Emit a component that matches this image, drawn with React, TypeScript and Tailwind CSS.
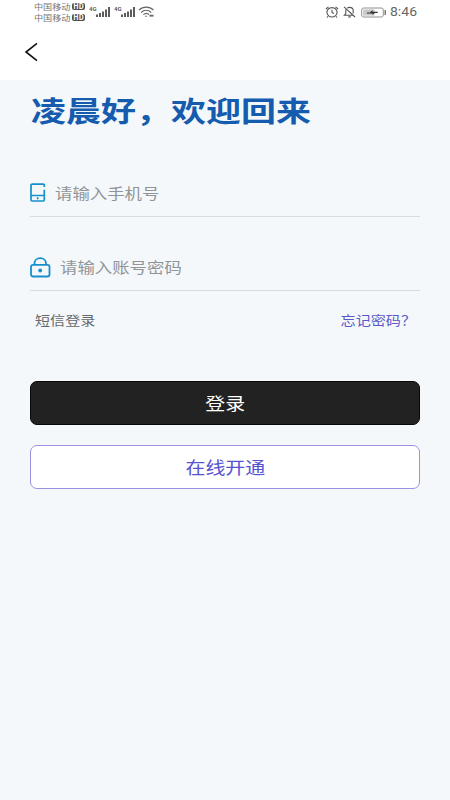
const Carrier = () => (
  <div className="flex h-[11px] items-center">
    <span className="w-[37px] origin-left scale-x-[1.14] whitespace-nowrap text-[8px] leading-[11px] text-[#777]">
      中国移动
    </span>
    <span className="ml-[1px] flex h-[7px] w-[13px] items-center justify-center rounded-[2px] bg-[#505050] text-[7px] font-bold leading-none text-white">
      HD
    </span>
  </div>
);

const Signal = () => (
  <svg width="23" height="13" viewBox="0 0 23 13" fill="#5c5c5c">
    <text x="0" y="6" fontSize="6" fontWeight="bold" fontFamily="Roboto, sans-serif">
      4G
    </text>
    <rect x="7" y="9.5" width="2" height="2.5" />
    <rect x="10" y="8" width="2" height="4" />
    <rect x="13" y="6.5" width="2" height="5.5" />
    <rect x="16" y="4.5" width="2" height="7.5" />
    <rect x="19" y="2" width="2" height="10" />
  </svg>
);

const Wifi = () => (
  <svg width="17" height="12" viewBox="0 0 17 12" fill="none" stroke="#666" strokeWidth="1.2">
    <path d="M1 4.2C5 .1 11.500 .1 15.500 4.200M3.200 6.500c3-3 7-3 10 0M5.400 8.700c1.700-1.700 4-1.700 5.700 0" />
    <circle cx="8" cy="10.300" r=".8" fill="#666" stroke="none" />
    <path d="M11.500 9.700h4" strokeWidth="1.800" />
  </svg>
);

const Alarm = () => (
  <svg width="14" height="12" viewBox="0 0 14 12" fill="none" stroke="#555" strokeWidth="1.1">
    <ellipse cx="7" cy="6.300" rx="5.100" ry="4.700" />
    <path d="M.9 3 3.500 .9M13.100 3 10.500 .9M7 3.800v2.700l2 1M3 10.300l-1 1.200M11 10.300l1 1.200" />
  </svg>
);

const BellOff = () => (
  <svg width="13" height="12" viewBox="0 0 13 12" fill="none" stroke="#555" strokeWidth="1.1">
    <path d="M1 .8 12 11M2.800 3.500v4L1.300 9.300h8.400M4.300 2C5 1.600 5.600 1.400 6.500 1.400c2.200 0 3.700 1.300 3.700 3.400V7.500M5.300 10.900h2.500" />
  </svg>
);

const Battery = () => (
  <svg width="26" height="11" viewBox="0 0 26 11" fill="none">
    <rect x=".7" y="1" width="21.600" height="9" rx="2" stroke="#909090" fill="#fff" />
    <rect x="2.200" y="2.400" width="11.300" height="6.200" fill="#c8c8c8" />
    <path d="M6 5.400h3L11.500 3v1.700h5.200v1.400h-3L11.500 8V6.500H6z" fill="#333" />
    <rect x="23.500" y="3" width="1.500" height="5" rx=".5" fill="#777" />
  </svg>
);

const PhoneIcon = () => (
  <svg width="16" height="20" viewBox="0 0 16 20" fill="none" stroke="#168fcc" strokeWidth="1.700">
    <path d="M14.300 4V2.200Q14.300 1.200 13.200 1.200H2.200Q1 1.200 1 2.200V16.800Q1 18 2.200 18H13.200Q14.300 18 14.300 16.800V6.800M1 12.500H14.300" />
    <circle cx="7.700" cy="15.300" r="1.100" fill="#168fcc" stroke="none" />
  </svg>
);

const LockIcon = () => (
  <svg width="22" height="21" viewBox="0 0 22 21" fill="none" stroke="#168fcc" strokeWidth="1.800">
    <rect x="1" y="7.800" width="18.500" height="11.700" rx="2" />
    <path d="M4.500 7.800V6.300C4.500 3.300 7 1.100 10.200 1.100s5.800 2.200 5.800 5.200v1.500" />
    <circle cx="10.200" cy="13.500" r="1.900" fill="#168fcc" stroke="none" />
  </svg>
);

export default function App() {
  return (
    <div className="h-[800px] w-[450px] overflow-hidden bg-[#f4f8fb] font-['Noto_Sans_CJK_SC',sans-serif]">
      <header className="h-20 bg-white">
        <div className="flex h-6 items-start justify-between pl-[34px] pr-[33px]">
          <div className="flex">
            <div className="pt-[1px]">
              <Carrier />
              <Carrier />
            </div>
            <div className="ml-[4px] flex gap-[2px] pt-[5px]">
              <Signal />
              <Signal />
              <span className="-ml-[1px] pt-[1px]">
                <Wifi />
              </span>
            </div>
          </div>
          <div className="flex h-6 items-center">
            <Alarm />
            <span className="ml-[4px]">
              <BellOff />
            </span>
            <span className="ml-[5px]">
              <Battery />
            </span>
            <span className="ml-[3px] w-[27px] origin-left scale-x-[1.12] pt-[1px] font-[Roboto] text-[12.500px] leading-none text-[#666]">
              8:46
            </span>
          </div>
        </div>
        <button type="button" aria-label="返回" className="ml-6 mt-[18px] block">
          <svg width="15" height="20" viewBox="0 0 15 20" fill="none" stroke="#111" strokeWidth="1.600">
            <path d="M13 1.300 2 10l11 8.700" />
          </svg>
        </button>
      </header>

      <main className="px-[30px]">
        <h1 className="ml-[1px] flex h-[60px] origin-left scale-x-[1.215] items-center whitespace-nowrap text-[28.800px] font-bold leading-none text-[#155bae]">
          凌晨好，欢迎回来
        </h1>
        <div className="mt-[30px] flex h-[47px] items-center border-b border-[#d9dcdf]">
          <PhoneIcon />
          <span className="ml-[9px] origin-left scale-x-[1.2] text-[14.500px] text-[#919497]">请输入手机号</span>
        </div>
        <div className="mt-[27px] flex h-[47px] items-center border-b border-[#d9dcdf]">
          <LockIcon />
          <span className="ml-[8px] origin-left scale-x-[1.2] text-[14.500px] text-[#919497]">请输入账号密码</span>
        </div>
        <div className="flex h-[58px] items-center justify-between pl-[5px] pr-[4px] text-[13px]">
          <span className="origin-left scale-x-[1.16] text-[#66696b]">短信登录</span>
          <span className="origin-right scale-x-[1.16] text-[#5b59c9]">忘记密码？</span>
        </div>
        <button
          type="button"
          className="mt-8 flex h-11 w-full items-center justify-center rounded-[7px] border border-[#080808] bg-[#222] text-[17.200px] text-white"
        >
          <span className="scale-x-[1.16]">登录</span>
        </button>
        <button
          type="button"
          className="mt-5 flex h-11 w-full items-center justify-center rounded-[7px] border border-[#9b91e0] bg-white text-[17.200px] text-[#5553d0]"
        >
          <span className="scale-x-[1.16]">在线开通</span>
        </button>
      </main>
    </div>
  );
}
